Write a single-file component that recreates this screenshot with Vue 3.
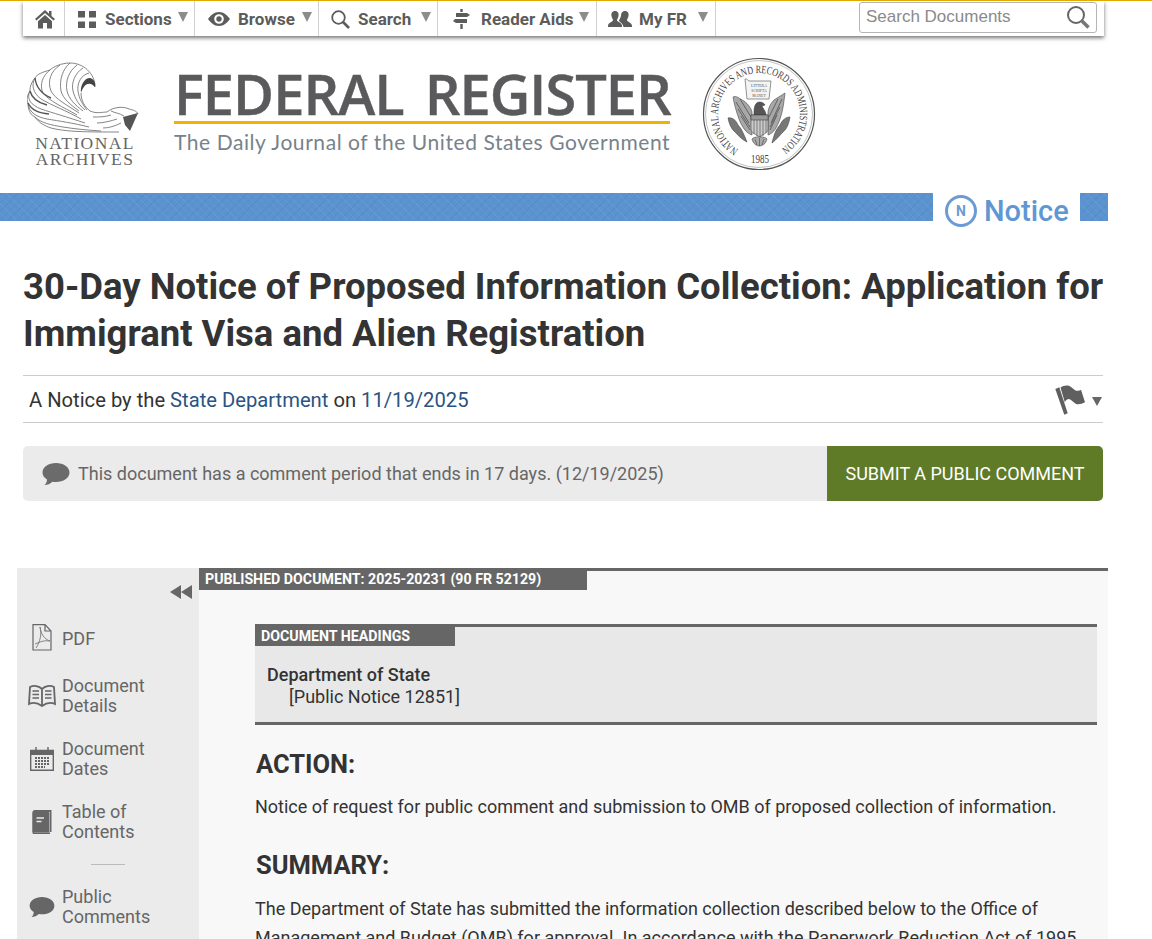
<template>
  <div class="page">
    <nav class="nav">
      <ul class="nav-list">
        <li class="nav-item home">
          <svg width="22" height="20" viewBox="0 0 22 20"><path d="M11 1 L1 10 L2.500 11.600 L11 4 L19.500 11.600 L21 10 L17.500 6.900 V2 H15 V4.700 Z" fill="#5c5c5c"/><path d="M4 12.200 L11 6 L18 12.200 V19.500 H13 V14 H9 V19.500 H4 Z" fill="#5c5c5c"/></svg>
        </li>
        <li class="nav-item sections">
          <svg width="18" height="17" viewBox="0 0 18 17"><rect width="7" height="6.500" fill="#5c5c5c"/><rect x="11" width="7" height="6.500" fill="#5c5c5c"/><rect y="10.500" width="7" height="6.500" fill="#5c5c5c"/><rect x="11" y="10.500" width="7" height="6.500" fill="#5c5c5c"/></svg>
          <span>Sections</span><i class="caret"></i>
        </li>
        <li class="nav-item browse">
          <svg width="22" height="14" viewBox="0 0 22 14"><path fill-rule="evenodd" d="M11 0 C6 0 2.500 3.500 0 7 C2.500 10.500 6 14 11 14 C16 14 19.500 10.500 22 7 C19.500 3.500 16 0 11 0 Z M11 2.200 A4.800 4.800 0 1 1 11 11.800 A4.800 4.800 0 1 1 11 2.200 Z" fill="#5c5c5c"/><circle cx="11" cy="7" r="2.700" fill="#5c5c5c"/></svg>
          <span>Browse</span><i class="caret"></i>
        </li>
        <li class="nav-item search">
          <svg width="19" height="19" viewBox="0 0 19 19"><circle cx="7.500" cy="7.500" r="6.300" fill="none" stroke="#5c5c5c" stroke-width="1.800"/><path d="M12 12 L18 18" stroke="#5c5c5c" stroke-width="2.600"/></svg>
          <span>Search</span><i class="caret"></i>
        </li>
        <li class="nav-item aids">
          <svg width="17" height="20" viewBox="0 0 17 20"><rect x="7.300" y="0" width="2.400" height="3" fill="#5c5c5c"/><path d="M3 4 H14 L17 6 L14 8 H3 Z M2 10 H14 V14 H3 L0 12 Z" fill="#5c5c5c"/><rect x="7.300" y="15" width="2.400" height="5" fill="#5c5c5c"/></svg>
          <span>Reader Aids</span><i class="caret"></i>
        </li>
        <li class="nav-item myfr">
          <svg width="24" height="16" viewBox="0 0 24 16"><path d="M7 0 C10 0 11 2.500 10.500 5 C10.200 7 9 8 9 9.300 C9 11 13.500 11.500 14 14.500 V16 H0 V14.500 C.5 11.500 5 11 5 9.300 C5 8 3.800 7 3.500 5 C3 2.500 4 0 7 0 Z" fill="#5c5c5c"/><path d="M17 0 C20 0 21 2.500 20.500 5 C20.200 7 19 8 19 9.300 C19 11 23.500 11.500 24 14.500 V16 H15.500 C15 12 11 11 11 9.500 C11.500 8 12.500 7 13 5 C13 2.500 14 0 17 0 Z" fill="#5c5c5c"/></svg>
          <span>My FR</span><i class="caret"></i>
        </li>
      </ul>
      <div class="search-box">
        <span class="search-text">Search Documents</span>
        <svg width="24" height="24" viewBox="0 0 24 24"><circle cx="10" cy="10" r="8" fill="none" stroke="#666" stroke-width="2"/><path d="M15.500 15.500 L22.500 22.500" stroke="#777" stroke-width="3.500"/></svg>
      </div>
    </nav>

    <header class="masthead">
      <div class="archives">
        <svg class="eagle" width="112" height="74" viewBox="0 0 112 74">
          <g fill="none" stroke="#777" stroke-width=".9">
            <path d="M68 26 C68 12 56 2 43 2 C34 2 26 6 23 9 C16 11 10 13 8 17 C3 23 3 28 3 30 C-1 36 0 40 1 42 C1 50 4 54 8 56 C12 62 18 65 24 67"/>
            <path d="M43 2 C36 8 32 18 34 30 C36 38 44 44 52 50"/>
            <path d="M50 4 C42 10 38 20 40 30 C42 38 48 44 56 50"/>
            <path d="M56 7 C48 12 44 22 46 30 C48 38 52 44 58 49"/>
            <path d="M62 12 C54 14 50 22 51 30 C52 38 56 44 60 49"/>
            <path d="M23 9 C16 14 12 24 16 32 C22 40 36 46 50 54"/>
            <path d="M33 4 C24 10 20 20 24 30 C28 38 40 44 52 52"/>
            <path d="M8 17 C4 24 6 32 14 38 C24 44 40 50 54 58"/>
            <path d="M3 30 C-1 38 4 44 14 48 C26 52 40 56 58 62"/>
            <path d="M1 42 C2 52 10 56 20 58 C32 60 46 62 62 66"/>
            <path d="M8 56 C14 62 24 64 36 66 C48 68 60 69 74 70"/>
            <path d="M24 67 C40 71 60 71 92 71"/>
            <path d="M54 32 C54 40 58 46 63 50 C70 53 75 51 80 51 C86 46 96 45 102 48 C106 49 110 50 111 53"/>
            <path d="M66 56 C72 56 78 56 84 54 M70 62 C76 62 84 60 90 58 M76 67 C82 67 88 65 94 62"/>
            <path d="M84 50 C88 52 92 52 97 55"/>
          </g>
          <g fill="none" stroke="#555" stroke-width="1.400">
            <path d="M3 30 C5 38 12 42 20 44 M1 42 C5 50 13 52 22 53 M8 17 C9 26 15 33 24 37"/>
          </g>
          <path d="M68 26 C63 20 57 22 54 32 C53 25 57 17 63 17 C67 18 69 22 68 26 Z" fill="#444"/>
          <path d="M96 56 L111 52 L103 70 L98 64 Z" fill="#555"/>
        </svg>
        <div class="archives-name">NATIONAL<br>ARCHIVES</div>
      </div>
      <div class="fr-logo">
        <div class="fr-title">FEDERAL&nbsp; REGISTER</div>
        <div class="fr-sub">The Daily Journal of the United States Government</div>
      </div>
      <svg class="seal" width="114" height="114" viewBox="0 0 114 114">
        <circle cx="57" cy="57" r="55.500" fill="#fff" stroke="#555" stroke-width="1.200"/>
        <circle cx="57" cy="57" r="53.500" fill="none" stroke="#999" stroke-width=".6"/>
        <defs><path id="sealArc" d="M36.500 92.500 A41 41 0 1 1 77.500 92.500"/></defs>
        <text class="seal-text"><textPath href="#sealArc" textLength="212" lengthAdjust="spacingAndGlyphs">NATIONAL ARCHIVES AND RECORDS ADMINISTRATION</textPath></text>
        <text class="seal-year" x="58" y="106" text-anchor="middle" textLength="18" lengthAdjust="spacingAndGlyphs">1985</text>
        <path d="M43 22 C45 21 46 24 47 24 H69 L67 42 H45 Z" fill="#f4f4f4" stroke="#666" stroke-width=".7"/>
        <text class="seal-tiny" x="57" y="29.500" text-anchor="middle">LITTERA</text>
        <text class="seal-tiny" x="57" y="34.500" text-anchor="middle">SCRIPTA</text>
        <text class="seal-tiny" x="57" y="39.500" text-anchor="middle">MANET</text>
        <g stroke="#444" stroke-width=".6">
          <path d="M31 40 C34 38 38 42 42 44 C46 47 50 52 50 56 L50 78 C44 76 40 70 37 62 C34 54 32 46 31 40 Z" fill="#a8a8a8"/>
          <path d="M83 36 C80 38 75 41 72 43 C68 47 66 52 66 56 L66 78 C72 76 75 70 78 62 C81 54 82 44 83 36 Z" fill="#a8a8a8"/>
          <path d="M34 45 L47 66 M36 52 L48 70 M39 59 L48 73 M80 42 L69 66 M78 50 L68 70 M75 58 L68 73 M38 42 L49 60 M76 42 L67 60" fill="none" stroke="#333"/>
          <path d="M52 58 C52 52 52 46 57 45 C60 45 62 46 63 48 L60 49 C61 52 64 54 64 58 Z" fill="#555"/>
          <path d="M49 58 H66 V72 C66 76 60 78 57.500 80 C55 78 49 76 49 72 Z" fill="#ccc"/>
          <rect x="49" y="58" width="17" height="5" fill="#999"/>
          <path d="M52 63 V77 M55 63 V79 M58 63 V80 M61 63 V79 M64 63 V76" fill="none"/>
          <path d="M26 61 C30 60 34 63 36 68 C40 72 42 78 45 85 C39 82 36 78 33 75 C29 72 27 66 26 61 Z" fill="#777"/>
          <path d="M88 60 C84 60 80 63 78 68 C74 72 72 78 70 86 C75 82 78 78 81 75 C85 72 87 66 88 60 Z" fill="#777"/>
          <path d="M50 82 C52 79 63 79 65 82 C64 87 60 89 57.500 89 C55 89 51 87 50 82 Z" fill="#aaa"/>
          <path d="M53 82 L55 88 M57.500 81 V89 M62 82 L60 88" fill="none"/>
        </g>
      </svg>
    </header>

    <div class="type-row">
      <div class="blue-bar"></div>
      <div class="type-label">
        <span class="type-badge">N</span>
        <span class="type-name">Notice</span>
      </div>
      <div class="blue-end"></div>
    </div>

    <h1 class="doc-title">30-Day Notice of Proposed Information Collection: Application for Immigrant Visa and Alien Registration</h1>

    <div class="byline">
      <p>A Notice by the <a>State Department</a> on <a>11/19/2025</a></p>
      <div class="flag">
        <svg width="32" height="32" viewBox="0 0 32 32">
          <path d="M.3 5 L4.300 3.300 L12.700 29.300 L9.300 30.700 Z" fill="#5f5f5f"/>
          <path d="M5.500 3.500 C8 1.500 11 1 14 1.700 C17 3 19 6 21 6.700 C23 7 25 6.500 26 5.700 L30 18.300 C27 20 24 20.500 21 20 C19 19 16 15.500 14 15 C12 15 10.500 16.500 9.800 18.300 Z" fill="#5f5f5f"/>
        </svg>
        <i class="flag-caret"></i>
      </div>
    </div>

    <div class="comment-bar">
      <div class="comment-note">
        <svg width="28" height="24" viewBox="0 0 28 24"><path d="M14 1 C21.500 1 27.500 5 27.500 10.500 C27.500 16 21.500 20 14 20 C12.800 20 11.500 19.900 10.500 19.700 C8.500 21.700 5.500 23 2.500 23 C4.200 21.500 5 19.500 5 17.500 C2.200 15.800 .5 13.300 .5 10.500 C.5 5 6.500 1 14 1 Z" fill="#6b6b6b"/></svg>
        <span>This document has a comment period that ends in 17 days. (12/19/2025)</span>
      </div>
      <a class="comment-btn">SUBMIT A PUBLIC COMMENT</a>
    </div>

    <div class="doc-area">
      <aside class="sidebar">
        <div class="collapse"><i></i><i></i></div>
        <ul class="side-list">
          <li class="side-item pdf">
            <span class="side-icon">
              <svg width="20" height="27" viewBox="0 0 20 27"><path d="M1 .7 H13 L19 7 V26 H1 Z M13 .7 V7 H19" fill="none" stroke="#666" stroke-width="1.200"/><path d="M4 24 C8 18 10 10 8 3 C9 10 12 15 18 17 C12 16 8 18 3 20" fill="none" stroke="#777" stroke-width=".9"/></svg>
            </span>
            <span>PDF</span>
          </li>
          <li class="side-item">
            <span class="side-icon">
              <svg width="28" height="22" viewBox="0 0 28 22"><path d="M14 4 C11 1 6 0 2 2 L1 19 C5 17 10 18 14 21 C18 18 23 17 27 19 L26 2 C22 0 17 1 14 4 Z M14 4 V21" fill="none" stroke="#666" stroke-width="1.800"/><path d="M4.500 6 H11 M4.500 9.500 H11 M4.500 13 H11 M17 6 H23.500 M17 9.500 H23.500 M17 13 H23.500" stroke="#666" stroke-width="1.400"/></svg>
            </span>
            <span>Document<br>Details</span>
          </li>
          <li class="side-item">
            <span class="side-icon">
              <svg width="24" height="24" viewBox="0 0 24 24"><path d="M.7 3.500 H23.300 V23.300 H.7 Z" fill="none" stroke="#666" stroke-width="1.400"/><rect x="1" y="3.500" width="22" height="4.500" fill="#666"/><path d="M6 0 V5 M18 0 V5" stroke="#666" stroke-width="1.400"/><path d="M5 11 H19 M5 14 H19 M5 17 H19 M5 20 H15" stroke="#666" stroke-width="2" stroke-dasharray="2 1"/></svg>
            </span>
            <span>Document<br>Dates</span>
          </li>
          <li class="side-item">
            <span class="side-icon">
              <svg width="20" height="25" viewBox="0 0 20 25"><path d="M2 0 H19.500 V22 H18 V2 H2 Z" fill="#666"/><path d="M.5 2 C.5 1 1 .5 2 .5 V22.500 H18 V24 H2 C1 24 .5 23.500 .5 22.500 Z" fill="#666"/><rect x=".5" y="2" width="17" height="20.500" rx="1" fill="#666"/><path d="M4.500 8 H12 M4.500 11.500 H9.500" stroke="#ebebeb" stroke-width="1.500"/></svg>
            </span>
            <span>Table of<br>Contents</span>
          </li>
          <li class="side-rule"></li>
          <li class="side-item">
            <span class="side-icon">
              <svg width="26" height="22" viewBox="0 0 28 24"><path d="M14 1 C21.500 1 27.500 5 27.500 10.500 C27.500 16 21.500 20 14 20 C12.800 20 11.500 19.900 10.500 19.700 C8.500 21.700 5.500 23 2.500 23 C4.200 21.500 5 19.500 5 17.500 C2.200 15.800 .5 13.300 .5 10.500 C.5 5 6.500 1 14 1 Z" fill="#666"/></svg>
            </span>
            <span>Public<br>Comments</span>
          </li>
        </ul>
      </aside>

      <main class="doc-main">
        <div class="tag tag-published">PUBLISHED DOCUMENT: 2025-20231 (90 FR 52129)</div>
        <div class="doc-body">
          <section class="headings">
            <div class="tag tag-headings">DOCUMENT HEADINGS</div>
            <div class="headings-text">
              <p class="agency">Department of State</p>
              <p class="notice-no">[Public Notice 12851]</p>
            </div>
          </section>
          <h2>ACTION:</h2>
          <p>Notice of request for public comment and submission to OMB of proposed collection of information.</p>
          <h2>SUMMARY:</h2>
          <p class="summary">The Department of State has submitted the information collection described below to the Office of Management and Budget (OMB) for approval. In accordance with the Paperwork Reduction Act of 1995</p>
        </div>
      </main>
    </div>
  </div>
</template>

<script setup>
</script>

<style>
html, body {
  height: 939px;
  overflow: hidden;
  background: #fff;
}
</style>

<style scoped>
.page {
  height: 939px;
  overflow: hidden;
  border-top: 1px solid #e0a800;
  box-sizing: border-box;
  font-family: Roboto, sans-serif;
  color: #333;
}

.nav {
  display: flex;
  justify-content: space-between;
  width: 1081px;
  height: 35px;
  margin-left: 23px;
  background: #fff;
  box-shadow: 0 2px 4px rgb(0 0 0 / 0.55);
}
.nav-list {
  display: flex;
  margin: 0;
  padding: 0;
  list-style: none;
}
.nav-item {
  display: flex;
  align-items: center;
  box-sizing: border-box;
  gap: 9px;
  padding-top: 1px;
  padding-left: 12px;
  border-right: 1px solid #d0d0d0;
  font-size: 17px;
  font-weight: 700;
  color: #5c5c5c;
  position: relative;
}
.home { width: 42px; padding-left: 11px; }
.sections { width: 130px; padding-left: 13px; }
.browse { width: 124px; padding-left: 13px; gap: 8px; }
.search { width: 119px; padding-left: 12px; gap: 8px; }
.aids { width: 159px; padding-left: 15px; gap: 11px; }
.myfr { width: 119px; padding-left: 11px; gap: 7px; }
.caret {
  position: absolute;
  right: 6px;
  top: 11px;
  border-left: 5.500px solid transparent;
  border-right: 5.500px solid transparent;
  border-top: 10px solid #8c8c8c;
}
.myfr .caret,
.aids .caret { right: 7px; }
.search-box {
  display: flex;
  align-items: center;
  justify-content: space-between;
  box-sizing: border-box;
  width: 238px;
  height: 31px;
  margin: 1px 7px 0 0;
  padding: 0 6px 2px 6px;
  border: 1px solid #b5b5b5;
  border-radius: 3px;
  font-family: "Liberation Sans", sans-serif;
  font-size: 17px;
  color: #8a8a8a;
}

.masthead {
  display: flex;
  margin-left: 27px;
  padding-top: 25px;
  height: 132px;
}
.archives {
  width: 112px;
  display: flex;
  flex-direction: column;
  align-items: center;
}
.eagle { flex: none; }
.archives-name {
  margin: 0 0 0 4px;
  font-family: "Liberation Serif", serif;
  font-size: 17.500px;
  line-height: 16px;
  letter-spacing: 1.400px;
  text-align: center;
  color: #666;
}
.fr-logo {
  width: 496px;
  margin-left: 35px;
}
.fr-title {
  font-family: "Open Sans", sans-serif;
  font-size: 56px;
  line-height: 60px;
  font-weight: 600;
  color: #5a5a5c;
  letter-spacing: -1px;
  word-spacing: -3px;
  white-space: nowrap;
  height: 58px;
  padding-top: 2px;
  border-bottom: 3px solid #f0b400;
  -webkit-text-stroke: 0.4px #5a5a5c;
}
.fr-sub {
  margin-top: 5px;
  font-family: Lato, sans-serif;
  font-size: 21px;
  line-height: 26px;
  color: #77828a;
  letter-spacing: 0.570px;
  white-space: nowrap;
}
.seal {
  margin: -4px 0 0 32px;
  flex: none;
}
.seal-text { font-family: "Liberation Serif", serif; font-size: 11px; fill: #444; }
.seal-year { font-family: "Liberation Serif", serif; font-size: 12px; fill: #444; }
.seal-tiny { font-family: "Liberation Serif", serif; font-size: 3.800px; fill: #555; }

.type-row {
  display: flex;
  height: 28px;
  width: 1108px;
}
.blue-bar,
.blue-end {
  background-color: #5a93d0;
  background-image:
    repeating-linear-gradient(45deg, rgb(255 255 255 / 0.05) 0 1px, transparent 1px 6px),
    repeating-linear-gradient(-45deg, rgb(0 0 0 / 0.04) 0 1px, transparent 1px 6px);
}
.blue-bar { width: 933px; }
.blue-end { width: 28px; margin-left: auto; }
.type-label {
  display: flex;
  align-items: center;
  gap: 7px;
  padding: 2px 0 0 12px;
  height: 34px;
  box-sizing: border-box;
}
.type-badge {
  display: flex;
  align-items: center;
  justify-content: center;
  box-sizing: border-box;
  width: 32px;
  height: 32px;
  border: 3px solid #6b9bd2;
  border-radius: 50%;
  font-size: 14px;
  font-weight: 700;
  color: #6b9bd2;
}
.type-name {
  font-size: 29px;
  font-weight: 500;
  color: #5f97d3;
}

.doc-title {
  width: 1090px;
  margin: 42px 0 0 23px;
  font-size: 36.500px;
  line-height: 47px;
  font-weight: 700;
  color: #333;
}

.byline {
  display: flex;
  align-items: center;
  justify-content: space-between;
  box-sizing: border-box;
  width: 1080px;
  height: 48px;
  margin: 18px 0 0 23px;
  padding: 2px 0 0 6px;
  border-top: 1px solid #ccc;
  border-bottom: 1px solid #ccc;
}
.byline p {
  margin: 0;
  font-size: 20.200px;
  color: #333;
}
.byline a { color: #2a5382; }
.flag {
  display: flex;
  align-items: center;
  gap: 5px;
  margin-right: 1px;
}
.flag-caret {
  border-left: 5px solid transparent;
  border-right: 5px solid transparent;
  border-top: 9px solid #666;
  margin-top: 2px;
}

.comment-bar {
  display: flex;
  justify-content: space-between;
  width: 1080px;
  height: 55px;
  margin: 23px 0 0 23px;
  background: #ebebeb;
  border-radius: 5px;
  overflow: hidden;
}
.comment-note {
  display: flex;
  align-items: center;
  gap: 8px;
  padding-left: 19px;
  font-size: 18px;
  color: #666;
}
.comment-btn {
  display: flex;
  align-items: center;
  justify-content: center;
  width: 276px;
  background: #607b28;
  color: #fff;
  font-size: 18px;
}

.doc-area {
  display: flex;
  width: 1091px;
  height: 400px;
  margin: 67px 0 0 17px;
}
.sidebar {
  width: 182px;
  flex: none;
  background: #ebebeb;
}
.collapse {
  display: flex;
  justify-content: flex-end;
  padding: 17px 7px 0 0;
}
.collapse i {
  border-top: 7px solid transparent;
  border-bottom: 7px solid transparent;
  border-right: 11px solid #666;
}
.side-list {
  margin: 0;
  padding: 26px 0 0 0;
  list-style: none;
}
.side-item {
  display: flex;
  align-items: center;
  min-height: 42px;
  margin-bottom: 21px;
  font-size: 18px;
  line-height: 20.500px;
  color: #666;
}
.side-item.pdf {
  box-sizing: border-box;
  min-height: 30px;
  margin-bottom: 20px;
  padding-bottom: 2px;
}
.pdf .side-icon { margin-top: -4px; }
.side-icon {
  display: flex;
  justify-content: center;
  box-sizing: border-box;
  width: 45px;
  padding-left: 5px;
  flex: none;
}
.side-rule {
  width: 34px;
  height: 1px;
  margin: 0 0 21px 74px;
  background: #bbb;
}

.doc-main {
  flex: 1;
  background: #f8f8f8;
  border-top: 3px solid #666;
}
.tag {
  background: #666;
  color: #fff;
  font-size: 14.200px;
  font-weight: 700;
  line-height: 19px;
  padding-left: 6px;
  box-sizing: border-box;
}
.tag-published { width: 388px; line-height: 17px; padding-bottom: 2px; }
.tag-headings { width: 200px; }
.doc-body {
  padding: 34px 11px 0 56px;
}
.headings {
  background: #e8e8e8;
  border-top: 3px solid #666;
  border-bottom: 3px solid #666;
  height: 101px;
  box-sizing: border-box;
}
.headings-text {
  padding: 18px 12px 0;
  font-size: 18px;
  line-height: 22px;
  color: #333;
}
.headings-text p { margin: 0; }
.agency { font-weight: 500; }
.notice-no { padding-left: 22px; }
.doc-body h2 {
  margin: 22px 0 0 1px;
  font-size: 25.500px;
  line-height: 34px;
  font-weight: 700;
  color: #333;
}
.doc-body > p {
  margin: 11px 0 0;
  font-size: 18px;
  line-height: 29px;
  color: #333;
}
.doc-body > p + h2 { margin-top: 27px; }
.doc-body > p.summary { margin-top: 12px; }
</style>
